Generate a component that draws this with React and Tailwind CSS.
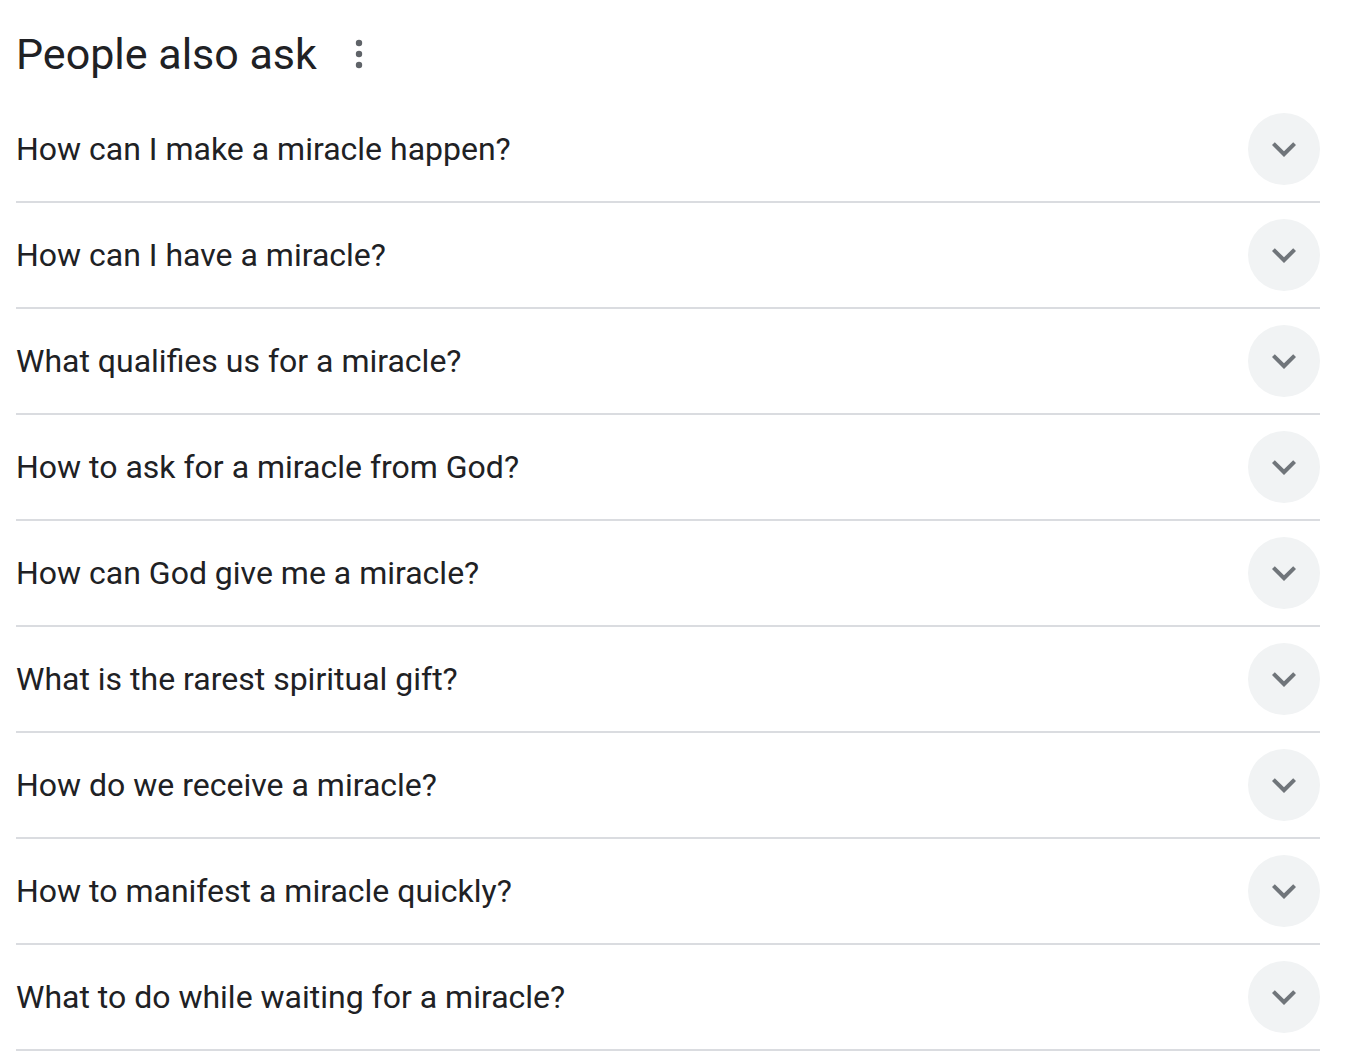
import React from 'react';

const questions = [
  'How can I make a miracle happen?',
  'How can I have a miracle?',
  'What qualifies us for a miracle?',
  'How to ask for a miracle from God?',
  'How can God give me a miracle?',
  'What is the rarest spiritual gift?',
  'How do we receive a miracle?',
  'How to manifest a miracle quickly?',
  'What to do while waiting for a miracle?',
];

function MoreVert() {
  return (
    <svg width="48" height="48" viewBox="0 0 24 24" fill="#5f6368">
      <circle cx="12" cy="6.5" r="1.6" />
      <circle cx="12" cy="12" r="1.6" />
      <circle cx="12" cy="17.5" r="1.6" />
    </svg>
  );
}

function Chevron() {
  return (
    <svg width="48" height="48" viewBox="0 0 24 24" fill="#70757a">
      <path d="M16.59 8.59L12 13.17 7.41 8.59 6 10l6 6 6-6z" />
    </svg>
  );
}

export default function App() {
  return (
    <div className="bg-white min-h-[1058px] pl-4 pr-[44px]" style={{ fontFamily: 'Roboto, "Noto Sans", sans-serif' }}>
      <div className="h-[97px] flex items-center pt-[10px]">
        <h2 className="text-[43px] leading-[52px] text-[#202124]">People also ask</h2>
        <div className="ml-[18px] flex items-center">
          <MoreVert />
        </div>
      </div>
      <div>
        {questions.map(q => (
          <div key={q} className="h-[106px] flex items-center justify-between border-b-2 border-[#dadce0]">
            <span className="text-[32px] leading-[40px] text-[#202124]">{q}</span>
            <div className="w-[72px] h-[72px] rounded-full bg-[#f1f3f4] flex items-center justify-center">
              <Chevron />
            </div>
          </div>
        ))}
      </div>
    </div>
  );
}
